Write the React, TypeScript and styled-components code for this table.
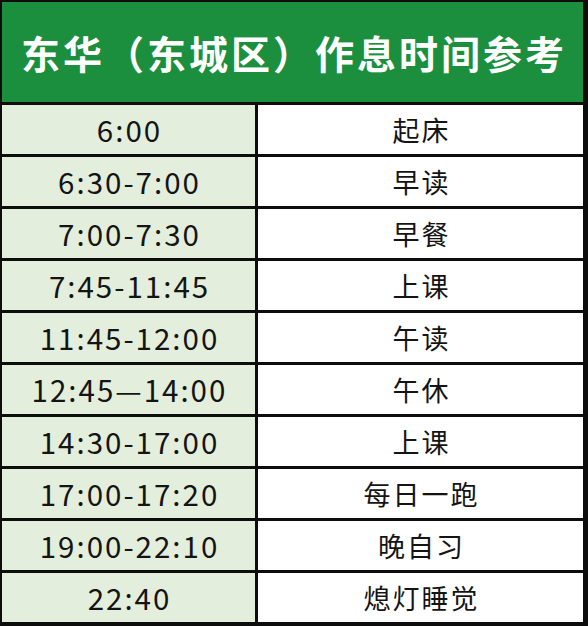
import React from "react";
import styled, { createGlobalStyle } from "styled-components";

const Global = createGlobalStyle`
  html, body { margin: 0; padding: 0; background: #0d0d0d; }
  #root { width: 588px; height: 626px; }
`;

const Frame = styled.div`
  width: 588px;
  height: 626px;
  box-sizing: border-box;
  padding: 2px 5px 2px 2px;
  background: #0d0d0d;
`;

const Table = styled.div`
  display: grid;
  grid-template-columns: 253px 328px;
  grid-template-rows: 100px repeat(10, 49.3px);
  row-gap: 2.7px;
  background: #0d0d0d;
`;

const Header = styled.div`
  grid-column: 1 / span 2;
  background: #1c8f3e;
  color: #ffffff;
  display: flex;
  align-items: center;
  justify-content: center;
  font-family: "Noto Sans CJK SC", "Noto Sans", sans-serif;
  font-weight: 700;
  font-size: 39px;
  letter-spacing: 3px;
  padding-left: 3px;
`;

const Cell = styled.div<{ $time?: boolean }>`
  display: flex;
  align-items: center;
  justify-content: center;
  background: ${(p) => (p.$time ? "#e3efdc" : "#ffffff")};
  margin-left: ${(p) => (p.$time ? "0" : "3px")};
  color: #141414;
  font-family: "Noto Sans CJK SC", "Noto Sans", sans-serif;
  font-size: ${(p) => (p.$time ? "29.5px" : "27px")};
  letter-spacing: 2px;
  padding-left: 2px;
`;

const rows: [string, string][] = [
  ["6:00", "起床"],
  ["6:30-7:00", "早读"],
  ["7:00-7:30", "早餐"],
  ["7:45-11:45", "上课"],
  ["11:45-12:00", "午读"],
  ["12:45—14:00", "午休"],
  ["14:30-17:00", "上课"],
  ["17:00-17:20", "每日一跑"],
  ["19:00-22:10", "晚自习"],
  ["22:40", "熄灯睡觉"],
];

export default function App() {
  return (
    <>
      <Global />
      <Frame>
        <Table>
          <Header>东华（东城区）作息时间参考</Header>
          {rows.map(([t, a]) => (
            <React.Fragment key={t}>
              <Cell $time>{t}</Cell>
              <Cell>{a}</Cell>
            </React.Fragment>
          ))}
        </Table>
      </Frame>
    </>
  );
}
